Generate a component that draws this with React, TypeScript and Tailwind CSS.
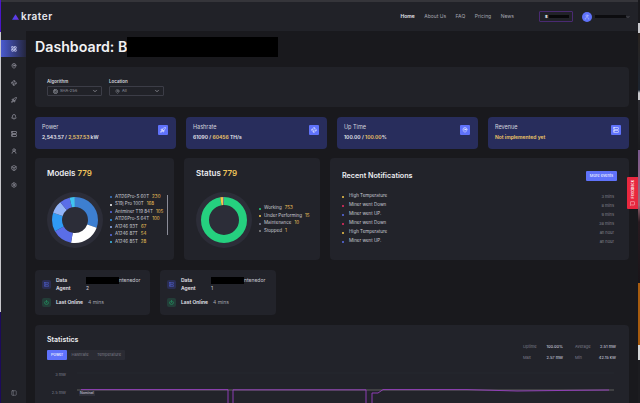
import { ChevronDown, Cpu, LayoutGrid, MapPin, Fan, Rocket, Bell, Server, UserRound, Box, Settings, PanelLeft, Power, User, MessageSquare } from "lucide-react"

const sideIcons = [MapPin, Fan, Rocket, Bell, Server, UserRound, Box, Settings]

const models = [
  ["A1126Pro-S 60T", "230", "bg-[#3d7fd1]"],
  ["S19j Pro 100T", "168", "bg-white"],
  ["Antminer T19 84T", "105", "bg-[#5a6ee8]"],
  ["A1126Pro-S 64T", "100", "bg-[#2f9bf5]"],
  ["A1246 93T", "67", "bg-[#93b4f7]"],
  ["A1246 87T", "54", "bg-[#5a6ee8]"],
  ["A1246 85T", "28", "bg-[#3fc3f2]"],
]

const statuses = [
  ["Working", "753", "bg-[#25d07f]"],
  ["Under Performing", "15", "bg-[#f5c84b]"],
  ["Maintenance", "10", "bg-[#7b7f96]"],
  ["Stopped", "1", "bg-[#8a8a8a]"],
]

const events = [
  ["High Temperature", "3 mins", "bg-[#f5c84b]"],
  ["Miner went Down", "8 mins", "bg-[#ee2d62]"],
  ["Miner went UP.", "9 mins", "bg-[#5a6ee8]"],
  ["Miner went Down", "38 mins", "bg-[#ee2d62]"],
  ["High Temperature", "an hour", "bg-[#f5c84b]"],
  ["Miner went UP.", "an hour", "bg-[#5a6ee8]"],
]

const Donut = ({ parts, r, sw }: { parts: [string, number][]; r: number; sw: number }) => {
  const c = 2 * Math.PI * r
  const total = parts.reduce((a, p) => a + p[1], 0)
  let off = 0
  return (
    <svg viewBox="0 0 56 56" className="w-14 h-14 shrink-0">
      <circle cx="28" cy="28" r="28" fill="#2c2d38" />
      {parts.map(([col, v]) => {
        const len = (v / total) * c
        const el = (
          <circle key={col + off} cx="28" cy="28" r={r} fill="none" stroke={col} strokeWidth={sw}
            strokeDasharray={`${len} ${c - len}`} strokeDashoffset={-off} transform="rotate(-90 28 28)" />
        )
        off += len
        return el
      })}
    </svg>
  )
}

const StatCard = ({ title, icon: Icon, children }: { title: string; icon: typeof Cpu; children: React.ReactNode }) => (
  <div className="flex-1 h-8 bg-[#282d5c] rounded-sm pl-[7px] pr-2 flex justify-between items-start">
    <div className="pt-[7px]">
      <div className="text-[5.5px] leading-[7px] text-[#d5d6de]">{title}</div>
      <div className="text-[5px] leading-[7px] mt-[3px] font-semibold text-[#e6e6ec]">{children}</div>
    </div>
    <div className="mt-2 w-[10px] h-[10px] rounded-[1px] bg-[#5f72fa] flex items-center justify-center">
      <Icon size={6} className="text-white" />
    </div>
  </div>
)

const Agent = ({ n, width }: { n: string; width: string }) => (
  <div className={`${width} h-[45px] bg-[#22232a] rounded-sm pl-[7px] pt-[6px]`}>
    <div className="flex">
      <div className="w-[9px] h-[9px] mt-1 rounded-[2px] bg-[#2a2d52] flex items-center justify-center">
        <Server size={5} className="text-[#5f72fa]" />
      </div>
      <div className="ml-[5px] w-[30px] text-[5px] leading-[8px] font-semibold text-[#e6e6ec]">Data<br />Agent</div>
      <div className="text-[5px] leading-[8px] text-[#c8c9d2]">
        <div className="flex items-center h-2">
          <span className="w-[33px] h-[7px] bg-black" />
          <span>ntenedor</span>
        </div>
        <div>{n}</div>
      </div>
    </div>
    <div className="flex items-center mt-[6px]">
      <div className="w-[9px] h-[9px] rounded-[2px] bg-[#233d38] flex items-center justify-center">
        <Power size={5} className="text-[#25d07f]" />
      </div>
      <span className="ml-[5px] text-[5px] font-semibold text-[#e6e6ec]">Last Online</span>
      <span className="ml-[5px] text-[5px] text-[#a5a6b0]">4 mins</span>
    </div>
  </div>
)

export default function App() {
  return (
    <div className="w-[640px] h-[403px] overflow-hidden bg-[#19191d] text-white flex font-['Inter',sans-serif]">
      <div className="w-px h-full bg-[linear-gradient(#4a16c8_0,#4a16c8_32px,#c8c8cc_32px,#c8c8cc_312px,#1c0a5a_312px)] shrink-0" />
      <div className="flex-1 min-w-0 flex flex-col">
        <div className="h-[31px] shrink-0 border-t-2 border-[#35353a] bg-[#212228] flex items-center pl-[11px] pr-2">
          <svg viewBox="0 0 10 8" className="w-[7px] h-[6px]">
            <defs>
              <linearGradient id="logo" x1="0" x2="1" y1="0" y2="0">
                <stop offset="0" stopColor="#3f4cf0" />
                <stop offset="1" stopColor="#7a2de0" />
              </linearGradient>
            </defs>
            <path d="M5 0 L10 8 L0 8 Z" fill="url(#logo)" />
          </svg>
          <span className="ml-[2px] text-[10px] font-semibold tracking-[0.5px] text-[#e8e8ee]">krater</span>
          <div className="ml-auto flex items-center gap-[9.5px] text-[5px] text-[#a5a6b0]">
            <span className="font-semibold text-[#e8e8ee]">Home</span>
            <span>About Us</span>
            <span>FAQ</span>
            <span>Pricing</span>
            <span>News</span>
          </div>
          <div className="ml-[25px] w-[34px] h-[11px] border border-[#4a2a72] rounded-[1px] flex items-center pl-[5px]">
            <span className="text-[4px] font-bold text-white">$</span>
            <span className="ml-px w-5 h-[3px] bg-[#08080a]" />
          </div>
          <div className="ml-[9px] w-[10px] h-[10px] rounded-full bg-[#5f72fa] flex items-center justify-center">
            <User size={6} className="text-[#c8d0ff]" />
          </div>
          <div className="ml-[3px] w-[31px] h-[3px] bg-[#0c0c0f]" />
          <ChevronDown size={4} className="text-[#c0c0c8]" />
        </div>
        <div className="flex-1 min-h-0 flex">
          <div className="w-[25px] shrink-0 bg-[#212228] flex flex-col items-center pt-[9px]">
            <div className="w-full h-[17px] bg-[linear-gradient(90deg,#4a5ad0,#24263e)] flex items-center justify-center">
              <LayoutGrid size={6} strokeWidth={3} className="text-[#c8ccf0]" />
            </div>
            {sideIcons.map((Icon, i) => (
              <div key={i} className="h-[17px] flex items-center justify-center">
                <Icon size={6} strokeWidth={3} className="text-[#8d8e98]" />
              </div>
            ))}
            <PanelLeft size={6} className="text-[#8d8e98] mt-auto mb-[7px]" />
          </div>
          <div className="flex-1 min-w-0 px-[9px] relative">
            <div className="flex items-center h-5 mt-[6px]">
              <h1 className="text-[14.2px] font-semibold text-[#f2f2f4] leading-5">Dashboard: B</h1>
              <span className="w-[151px] h-5 bg-black" />
            </div>
            <div className="h-10 mt-[10px] bg-[#212228] rounded-sm flex pl-3 pt-3 gap-[7px]">
              <div>
                <div className="text-[4.5px] leading-[5px] font-semibold text-[#d5d6de]">Algorithm</div>
                <div className="mt-[2px] w-[55px] h-[10px] border border-[#3c3d47] rounded-[1px] flex items-center pl-[5px] pr-[3px] text-[#9a9ba5]">
                  <Cpu size={5} />
                  <span className="ml-[2px] text-[4px]">SHA-256</span>
                  <ChevronDown size={6} className="ml-auto text-[#d0d0d8]" />
                </div>
              </div>
              <div>
                <div className="text-[4.5px] leading-[5px] font-semibold text-[#d5d6de]">Location</div>
                <div className="mt-[2px] w-[55px] h-[10px] border border-[#3c3d47] rounded-[1px] flex items-center pl-[5px] pr-[3px] text-[#9a9ba5]">
                  <MapPin size={5} />
                  <span className="ml-[2px] text-[4px]">All</span>
                  <ChevronDown size={6} className="ml-auto text-[#d0d0d8]" />
                </div>
              </div>
            </div>
            <div className="flex gap-[10px] mt-[10px]">
              <StatCard title="Power" icon={Rocket}>2,543.57 / <span className="text-[#f0c868]">2,537.53</span> kW</StatCard>
              <StatCard title="Hashrate" icon={Fan}>61090 / <span className="text-[#f0c868]">60456</span> TH/s</StatCard>
              <StatCard title="Up Time" icon={MapPin}>100.00 / <span className="text-[#f0c868]">100.00</span>%</StatCard>
              <StatCard title="Revenue" icon={Server}><span className="text-[#f0c868]">Not implemented yet</span></StatCard>
            </div>
            <div className="flex gap-[10px] mt-[9px] h-[102px]">
              <div className="w-[139px] bg-[#22232a] rounded-sm pl-3 pt-[9px] relative">
                <div className="text-[8px] leading-[12px] font-semibold text-[#ececf0]">Models <span className="text-[#f0c35a]">779</span></div>
                <div className="flex items-start mt-[13px]">
                  <Donut r={18} sw={10} parts={[["#3d7fd1", 230], ["#ffffff", 168], ["#5a6ee8", 105], ["#2f9bf5", 100], ["#93b4f7", 67], ["#5a6ee8", 54], ["#3fc3f2", 28], ["#8aa0d8", 6]]} />
                  <div className="ml-[7px] mt-[2.5px] flex flex-col gap-[2.5px]">
                    {models.map(([n, v, c]) => (
                      <div key={n} className="flex items-center h-[5px] text-[4.5px] whitespace-nowrap">
                        <span className={`w-[2px] h-[2px] rounded-full ${c}`} />
                        <span className="ml-[3px] text-[#c8c9d2]">{n}</span>
                        <span className="ml-[3px] text-[#f0c35a]">{v}</span>
                      </div>
                    ))}
                  </div>
                </div>
                <span className="absolute left-[132px] top-[37px] w-px h-10 bg-[#8b8c98]" />
              </div>
              <div className="w-[136px] bg-[#22232a] rounded-sm pl-3 pt-[9px]">
                <div className="text-[8px] leading-[12px] font-semibold text-[#ececf0]">Status <span className="text-[#f0c35a]">779</span></div>
                <div className="flex items-center mt-[13px]">
                  <Donut r={19} sw={8} parts={[["#25d07f", 753], ["#f5c84b", 15], ["#7b7f96", 10], ["#8a8a8a", 1]]} />
                  <div className="ml-[7px] flex flex-col gap-[2.5px]">
                    {statuses.map(([n, v, c]) => (
                      <div key={n} className="flex items-center h-[5px] text-[4.5px] whitespace-nowrap">
                        <span className={`w-[2px] h-[2px] rounded-full ${c}`} />
                        <span className="ml-[3px] text-[#c8c9d2]">{n}</span>
                        <span className="ml-[3px] text-[#f0c35a]">{v}</span>
                      </div>
                    ))}
                  </div>
                </div>
              </div>
              <div className="flex-1 bg-[#22232a] rounded-sm px-3 pt-[13px]">
                <div className="flex items-center justify-between h-[10px]">
                  <span className="text-[7.2px] font-semibold text-[#ececf0]">Recent Notifications</span>
                  <button className="w-[31px] h-[10px] bg-[#5f72fa] rounded-[1px] text-[4px] text-white">More events</button>
                </div>
                <div className="mt-[13px] flex flex-col gap-1 pr-[3px]">
                  {events.map(([n, t, c], i) => (
                    <div key={i} className="flex items-center h-[5px] text-[4.5px]">
                      <span className={`w-[2px] h-[2px] rounded-full ${c}`} />
                      <span className="ml-[5px] text-[#c8c9d2]">{n}</span>
                      <span className="ml-auto text-[4px] text-[#85868f]">{t}</span>
                    </div>
                  ))}
                </div>
              </div>
            </div>
            <div className="flex gap-[10px] mt-[10px]">
              <Agent n="2" width="w-[115px]" />
              <Agent n="1" width="w-[116px]" />
            </div>
            <div className="mt-[10px] h-[90px] bg-[#22232a] rounded-sm px-3 pt-[10px] relative">
              <div className="flex justify-between">
                <div>
                  <div className="text-[7px] leading-[10px] font-semibold text-[#ececf0]">Statistics</div>
                  <div className="mt-[5px] flex text-[4px] text-[#7d7e8a]">
                    <span className="w-5 h-[10px] bg-[#5f72fa] rounded-[1px] text-white flex items-center justify-center">Power</span>
                    <span className="w-[26px] h-[10px] bg-[#2a2b33] flex items-center justify-center">Hashrate</span>
                    <span className="w-8 h-[10px] bg-[#2a2b33] rounded-r-[1px] flex items-center justify-center">Temperature</span>
                  </div>
                </div>
                <div className="grid grid-cols-[18px_22px_28px_25px] gap-y-[5px] mt-[9px] mr-[1px] text-[4px] leading-[5px]">
                  <span className="text-[#7d7e8a]">Uptime</span>
                  <span className="text-[#dcdce2] text-right">100.00%</span>
                  <span className="text-[#7d7e8a] ml-3">Average</span>
                  <span className="text-[#dcdce2] text-right">2.51 mW</span>
                  <span className="text-[#7d7e8a]">Max</span>
                  <span className="text-[#dcdce2] text-right">2.57 mW</span>
                  <span className="text-[#7d7e8a] ml-3">Min</span>
                  <span className="text-[#dcdce2] text-right">42.15 kW</span>
                </div>
              </div>
              <svg className="mt-[9px] w-full h-10" viewBox="0 0 570 40" preserveAspectRatio="none">
                <text x="19" y="6.5" fontSize="4" textAnchor="end" fill="#7d7e8a">3 mW</text>
                <text x="19" y="24.5" fontSize="4" textAnchor="end" fill="#7d7e8a">2.5 mW</text>
                <line x1="30" y1="4" x2="567" y2="4" stroke="#2a2b33" strokeWidth="0.6" />
                <line x1="30" y1="21" x2="567" y2="21" stroke="#8a8a80" strokeWidth="0.6" />
                <path d="M34 20.6 H181 V40 M186 40 V20.8 H319 V40 M325 40 V24 L331 24 L336 20.6 H420 L470 22 L520 21.4 L562 21" fill="none" stroke="#9a3fc4" strokeWidth="0.9" />
              </svg>
              <span className="absolute left-[44px] top-[66px] bg-[#2e2f38] px-[1px] text-[3.5px] leading-[5px] text-[#dcdce2]">Nominal</span>
            </div>
            <div className="absolute right-0 top-[146px] w-[11px] h-8 bg-[#e8283f] rounded-l-[1px] flex flex-col items-center justify-center gap-[2px]">
              <span className="text-[4px] leading-[5px] text-white [writing-mode:vertical-rl] rotate-180">Feedback</span>
              <MessageSquare size={5} className="text-white" />
            </div>
          </div>
        </div>
      </div>
      <div className="w-[2px] h-full shrink-0 bg-[linear-gradient(#19191d_0,#19191d_23px,#c8c8cc_23px,#c8c8cc_33px,#2a2420_33px,#1c2430_90px,#c8c8cc_93px,#c8c8cc_100px,#2a2a30_100px,#1c1c20_150px,#7a5a90_150px,#a06878_205px,#2a1a20_222px,#1a1418_283px,#a85c10_283px,#a85c10_345px,#d8d8d8_345px,#d8d8d8_360px,#1c1c20_360px)]" />
    </div>
  )
}
